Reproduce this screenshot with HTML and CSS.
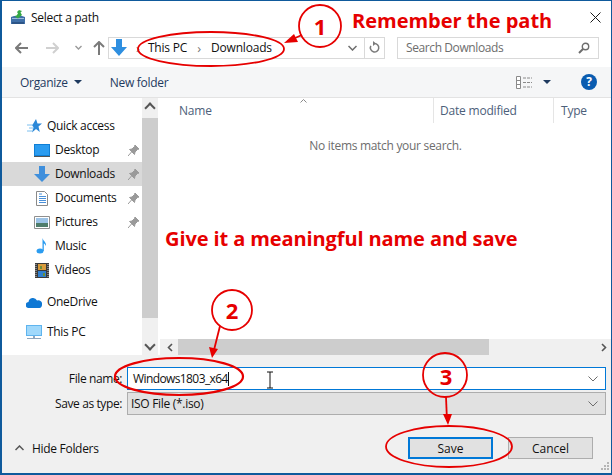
FILE: index.html
```html
<!DOCTYPE html>
<html lang="en">
<head>
    <meta charset="UTF-8">
    <title>Select a path</title>
    <link rel="stylesheet" href="styles.css">
</head>
<body>
<div class="window">

    <div class="titlebar">
        <svg class="app-icon" width="14" height="15" viewBox="0 0 14 15"><path d="M0 7l3-1h8l3 1v7H0z" fill="#3f6fa8"/><path d="M1 8h12v1H1z" fill="#9dbbdb"/><path d="M1 12h12v2H1z" fill="#2c5587"/><path d="M8 0l3 1-1.500 1.500L11 5 7 8.500 3.500 6l2-.5L7 3.500 6 2z" fill="#35a845"/></svg>
        <span class="title">Select a path</span>
        <svg class="close" width="11" height="11" viewBox="0 0 11 11"><path d="M.5.5l10 10M10.500.5l-10 10" stroke="#1a1a1a" stroke-width="1" fill="none"/></svg>
    </div>

    <div class="navbar">
        <svg class="nav-btn" width="14" height="12" viewBox="0 0 14 12"><path d="M6 1L1 6l5 5M1 6h12" stroke="#7a7a7a" stroke-width="2" fill="none"/></svg>
        <svg class="nav-btn fwd" width="14" height="12" viewBox="0 0 14 12"><path d="M8 1l5 5-5 5M13 6H1" stroke="#d0d0d0" stroke-width="2" fill="none"/></svg>
        <svg class="nav-btn drop" width="7" height="5" viewBox="0 0 7 5"><path d="M.5 1l3 3 3-3" stroke="#9a9a9a" stroke-width="1.400" fill="none"/></svg>
        <svg class="nav-btn up" width="12" height="14" viewBox="0 0 12 14"><path d="M1 6l5-5 5 5M6 1v13" stroke="#7a7a7a" stroke-width="2" fill="none"/></svg>
        <div class="address">
            <svg width="16" height="17" viewBox="0 0 16 17"><path d="M5 0h6v8h5l-8 9-8-9h5z" fill="#2f8fe0"/></svg>
            <span class="crumb-sep first">›</span>
            <span class="crumb">This PC</span>
            <span class="crumb-sep">›</span>
            <span class="crumb">Downloads</span>
            <svg class="addr-drop" width="9" height="6" viewBox="0 0 9 6"><path d="M.5 1l4 4 4-4" stroke="#6d6d6d" stroke-width="1.500" fill="none"/></svg>
            <span class="refresh">
                <svg width="11" height="13" viewBox="0 0 11 13"><path d="M5.500 2.500a4.200 4.200 0 1 1-3.700 2.300" stroke="#7a7a7a" stroke-width="1.500" fill="none"/><path d="M4 0l3 2.500L4 5z" fill="#7a7a7a"/></svg>
            </span>
        </div>
        <div class="search">
            <span>Search Downloads</span>
            <svg width="12" height="12" viewBox="0 0 12 12"><circle cx="7.500" cy="4.500" r="3.200" stroke="#6d6d6d" stroke-width="1.400" fill="none"/><path d="M5 7l-4 4" stroke="#6d6d6d" stroke-width="2"/></svg>
        </div>
    </div>

    <div class="toolbar">
        <span class="tool">Organize</span>
        <span class="caret"></span>
        <span class="tool new-folder">New folder</span>
        <svg class="view-icon" width="17" height="13" viewBox="0 0 17 13"><path d="M.5.500h4v12h-4zM.5 4.500h4M.5 8.500h4" stroke="#8a8a8a" fill="#fff"/><path d="M7 2h9M7 6.500h9M7 11h9" stroke="#8a8a8a" stroke-dasharray="3 1"/></svg>
        <span class="caret view-caret"></span>
        <span class="help">?</span>
    </div>

    <div class="browser">
        <div class="sidebar">
            <div class="tree">
                <div class="tree-item top first">
                    <svg width="16" height="14" viewBox="0 0 16 14"><path d="M10 0l1.500 4.500H16l-3.500 3 1.300 5.500-3.800-3-4 3.500 1.500-5.500L6 6.500l1-1.500z" fill="#2b88d8"/><path d="M1 6h6M3 9h5M1 12h5" stroke="#7cc0f0"/></svg>
                    <span>Quick access</span>
                </div>
                <div class="tree-item">
                    <svg width="16" height="13" viewBox="0 0 16 13"><path d="M0 0h16v12H0z" fill="#0f7fd6"/><path d="M1 1h14v10H1z" fill="#2b9cf0"/><path d="M0 12h16v1H0z" fill="#555"/></svg>
                    <span>Desktop</span><svg class="pin" width="11" height="11" viewBox="0 0 11 11"><path d="M7 0l4 4-1.500.5L7 7l-.5 2.500L1.500 4.500 4 4l2.500-2.500zM3.500 7L0 11" fill="#9a9a9a" stroke="#9a9a9a"/></svg>
                </div>
                <div class="tree-item selected">
                    <svg width="16" height="16" viewBox="0 0 16 16"><path d="M5 0h6v8h5l-8 8-8-8h5z" fill="#3f8fdc"/></svg>
                    <span>Downloads</span><svg class="pin" width="11" height="11" viewBox="0 0 11 11"><path d="M7 0l4 4-1.500.5L7 7l-.5 2.500L1.500 4.500 4 4l2.500-2.500zM3.500 7L0 11" fill="#9a9a9a" stroke="#9a9a9a"/></svg>
                </div>
                <div class="tree-item">
                    <svg width="16" height="15" viewBox="0 0 16 15"><path d="M2.500.5h8l3 3v11h-11z" fill="#fff" stroke="#8a8a8a"/><path d="M5 3h3M5 5.500h7M5 7.500h7M5 9.500h7M5 11.500h7" stroke="#4a90d9"/></svg>
                    <span>Documents</span><svg class="pin" width="11" height="11" viewBox="0 0 11 11"><path d="M7 0l4 4-1.500.5L7 7l-.5 2.500L1.500 4.500 4 4l2.500-2.500zM3.500 7L0 11" fill="#9a9a9a" stroke="#9a9a9a"/></svg>
                </div>
                <div class="tree-item">
                    <svg width="16" height="13" viewBox="0 0 16 13"><path d="M.5.500h15v12H.5z" fill="#fff" stroke="#8f8f8f"/><path d="M2 2h12v5H2z" fill="#9cc3e6"/><path d="M2 7h12v4H2z" fill="#4f7d6b"/></svg>
                    <span>Pictures</span><svg class="pin" width="11" height="11" viewBox="0 0 11 11"><path d="M7 0l4 4-1.500.5L7 7l-.5 2.500L1.500 4.500 4 4l2.500-2.500zM3.500 7L0 11" fill="#9a9a9a" stroke="#9a9a9a"/></svg>
                </div>
                <div class="tree-item">
                    <svg width="16" height="16" viewBox="0 0 16 16"><ellipse cx="6" cy="13" rx="3.500" ry="2.500" fill="#2b9cf0"/><path d="M8.500 13V0c1 3.500 4 4 3.500 8-1-2-2-2.500-2.200-2.500V13z" fill="#2b9cf0"/></svg>
                    <span>Music</span>
                </div>
                <div class="tree-item">
                    <svg width="16" height="15" viewBox="0 0 16 15"><path d="M1 0h14v15H1z" fill="#3a3a3a"/><path d="M2 1v13M14 1v13" stroke="#ccc" stroke-dasharray="1 1"/><path d="M4 1h8v6H4z" fill="#d89b3c"/><path d="M4 8h8v6H4z" fill="#2f7fd0"/><path d="M6 3h2v3H6zM9 10h2v3H9z" fill="#6a8f3c"/></svg>
                    <span>Videos</span>
                </div>
                <div class="tree-item top cloud">
                    <svg width="16" height="11" viewBox="0 0 16 11"><path d="M3 11a3 3 0 0 1-.5-6A4.500 4.500 0 0 1 11 3.500 3.800 3.800 0 0 1 16 8c0 1.500-1 3-2.500 3z" fill="#0f78d4"/></svg>
                    <span>OneDrive</span>
                </div>
                <div class="tree-item top pc">
                    <svg width="16" height="15" viewBox="0 0 16 15"><path d="M0 0h16v11H0z" fill="#5fb4ee"/><path d="M1 1h14v9H1z" fill="#9fd8fb"/><path d="M7 11h2v2H7zM1 13h14v1H1z" fill="#8fa6bd"/></svg>
                    <span>This PC</span>
                </div>
            </div>
            <div class="vscroll">
                <span class="arrow up-arrow"></span>
                <div class="vthumb"></div>
                <span class="arrow down-arrow"></span>
            </div>
        </div>

        <div class="files">
            <div class="file-head">
                <span class="col col-name">Name<svg class="sort" width="7" height="4" viewBox="0 0 7 4"><path d="M.5 3.500l3-3 3 3" stroke="#8a8a8a" fill="none"/></svg></span>
                <span class="col col-date">Date modified</span>
                <span class="col col-type">Type</span>
            </div>
            <div class="empty">No items match your search.</div>
            <div class="hscroll">
                <svg width="6" height="9" viewBox="0 0 6 9"><path d="M5 1L1.500 4.500 5 8" stroke="#555" stroke-width="1.600" fill="none"/></svg>
                <div class="hthumb"></div>
                <svg width="6" height="9" viewBox="0 0 6 9"><path d="M1 1l3.500 3.500L1 8" stroke="#555" stroke-width="1.600" fill="none"/></svg>
            </div>
        </div>
    </div>

    <div class="bottom">
        <div class="field">
            <label class="field-label">File name:</label>
            <div class="field-box name-box">
                <span class="typed">Windows1803_x64</span>
                <svg width="10" height="6" viewBox="0 0 10 6"><path d="M.5.500L5 5 9.500.500" stroke="#6d6d6d" fill="none"/></svg>
            </div>
        </div>
        <div class="field">
            <label class="field-label">Save as type:</label>
            <div class="field-box type-box">
                <span>ISO File (*.iso)</span>
                <svg width="10" height="6" viewBox="0 0 10 6"><path d="M.5.500L5 5 9.500.500" stroke="#6d6d6d" fill="none"/></svg>
            </div>
        </div>
        <div class="actions">
            <div class="hide-folders">
                <svg width="9" height="6" viewBox="0 0 9 6"><path d="M.5 5l4-4 4 4" stroke="#555" stroke-width="1.500" fill="none"/></svg>
                <span>Hide Folders</span>
            </div>
            <button class="btn btn-save" type="button">Save</button>
            <button class="btn" type="button">Cancel</button>
        </div>
    </div>

    <!-- Anmerkungen ueber dem Dialog -->
    <svg class="marks" width="612" height="475" viewBox="0 0 612 475">
        <g fill="none" stroke="#e60000" stroke-width="1.800">
            <ellipse cx="211" cy="49" rx="73" ry="17"/>
            <circle cx="320" cy="26" r="21"/>
            <path d="M302 35l-14 6"/>
            <circle cx="232" cy="310" r="20"/>
            <path d="M220 326l-6 24"/>
            <ellipse cx="179" cy="376.500" rx="64" ry="18.500" stroke-width="2.200"/>
            <circle cx="445" cy="375" r="22"/>
            <path d="M446 397l1 24"/>
            <ellipse cx="449" cy="446.500" rx="63" ry="20.500"/>
        </g>
        <g fill="#e60000">
            <path d="M284 43l10-9 4 8z"/>
            <path d="M212 358l-3-11 9 2z"/>
            <path d="M448 425l-5-11h9z"/>
        </g>
        <path d="M267 372h3v16h-3M273 372h-3M273 388h-3" fill="none" stroke="#111"/>
        <path d="M607 462h2v2h-2zM604 465h2v2h-2zM607 465h2v2h-2zM601 468h2v2h-2zM604 468h2v2h-2zM607 468h2v2h-2z" fill="#b5b5b5"/>
    </svg>
    <span class="note num num-1">1</span>
    <span class="note num num-2">2</span>
    <span class="note num num-3">3</span>
    <span class="note remember">Remember the path</span>
    <span class="note give">Give it a meaningful name and save</span>

</div>
</body>
</html>
```

FILE: styles.css
```css
* {
    box-sizing: border-box;
}

html, body {
    margin: 0;
    padding: 0;
}

body {
    width: 612px;
    height: 475px;
    overflow: hidden;
    font-family: "Open Sans", "Noto Sans", sans-serif;
    font-size: 12px;
    color: #111;
    background-color: white;
}

.window {
    position: relative;
    width: 612px;
    height: 475px;
    display: flex;
    flex-direction: column;
    border: 1px solid #0f5a9c;
    border-left-width: 2px;
    border-bottom-width: 2px;
    overflow: hidden;
}

.titlebar {
    height: 32px;
    flex: none;
    display: flex;
    align-items: center;
    padding-left: 9px;
}

.title {
    margin-left: 6px;
    letter-spacing: -0.3px;
}

.close {
    margin-left: auto;
    margin-right: 10px;
}

.navbar {
    height: 34px;
    flex: none;
    display: flex;
    align-items: center;
    padding-bottom: 5px;
}

.nav-btn {
    flex: none;
    margin-left: 13px;
}

.nav-btn.fwd {
    margin-left: 16px;
}

.nav-btn.drop {
    margin-left: 16px;
}

.nav-btn.up {
    margin-left: 11px;
}

.address {
    width: 277px;
    height: 22px;
    margin-left: 3px;
    display: flex;
    align-items: center;
    border: 1px solid #d9d9d9;
    padding-left: 2px;
    flex: none;
}

.crumb {
    letter-spacing: -0.2px;
}

.crumb-sep {
    color: #777;
    margin: 0 10px;
    font-size: 13px;
}

.crumb-sep.first {
    margin: 0 8px 0 9px;
}

.addr-drop {
    margin-left: auto;
    margin-right: 7px;
}

.refresh {
    width: 20px;
    height: 100%;
    border-left: 1px solid #d9d9d9;
    display: flex;
    align-items: center;
    justify-content: center;
}

.search {
    width: 202px;
    height: 22px;
    margin-left: 12px;
    display: flex;
    align-items: center;
    justify-content: space-between;
    border: 1px solid #d9d9d9;
    padding: 0 8px;
    color: #6d6d6d;
    letter-spacing: -0.4px;
    flex: none;
}

.toolbar {
    height: 31px;
    flex: none;
    display: flex;
    align-items: center;
    background-color: #f5f6f7;
    border-bottom: 1px solid #e3e3e3;
    padding-left: 18px;
}

.tool {
    color: #1e3a5f;
    letter-spacing: -0.3px;
}

.new-folder {
    margin-left: 28px;
}

.caret {
    width: 0;
    height: 0;
    margin-left: 6px;
    border-left: 4px solid transparent;
    border-right: 4px solid transparent;
    border-top: 4px solid #1e3a5f;
}

.view-icon {
    margin-left: auto;
}

.view-caret {
    margin-left: 10px;
}

.help {
    width: 16px;
    height: 16px;
    margin: 0 14px 0 30px;
    border-radius: 50%;
    background-color: #0a5cb0;
    color: white;
    font-weight: bold;
    font-size: 12px;
    line-height: 16px;
    text-align: center;
}

.browser {
    flex: 1;
    display: flex;
    min-height: 0;
}

.sidebar {
    width: 156px;
    flex: none;
    display: flex;
}

.tree {
    width: 140px;
    flex: none;
    display: flex;
    flex-direction: column;
}

.tree-item {
    height: 24px;
    flex: none;
    display: flex;
    align-items: center;
    padding-left: 32px;
    letter-spacing: -0.3px;
}

.tree-item span {
    margin-bottom: 2px;
}

.tree-item svg:first-child {
    margin-right: 5px;
    flex: none;
}

.tree-item.top {
    padding-left: 24px;
}

.tree-item.first {
    margin-top: 16px;
}

.tree-item.cloud {
    margin-top: 8px;
}

.tree-item.pc {
    margin-top: 6px;
}

.tree-item.selected {
    background-color: #d9d9d9;
}

.pin {
    margin-left: auto;
    margin-right: 3px;
}

.vscroll {
    width: 16px;
    flex: none;
    display: flex;
    flex-direction: column;
    background-color: #f0f0f0;
}

.arrow {
    height: 20px;
    flex: none;
    display: flex;
    align-items: center;
    justify-content: center;
}

.arrow::before {
    content: "";
    width: 6px;
    height: 6px;
    border-left: 2px solid #555;
    border-top: 2px solid #555;
    transform: rotate(45deg);
}

.down-arrow {
    margin-top: auto;
}

.down-arrow::before {
    transform: rotate(225deg);
}

.vthumb {
    height: 200px;
    background-color: #cdcdcd;
}

.files {
    flex: 1;
    margin-left: 2px;
    display: flex;
    flex-direction: column;
    min-width: 0;
}

.file-head {
    height: 25px;
    flex: none;
    display: flex;
    align-items: center;
    color: #4c607a;
}

.col {
    height: 100%;
    display: flex;
    align-items: center;
    letter-spacing: -0.2px;
}

.col-name {
    width: 273px;
    padding-left: 19px;
}

.sort {
    align-self: flex-start;
    margin-left: 88px;
    margin-top: 1px;
}

.col-date {
    width: 120px;
    padding-left: 6px;
    border-left: 1px solid #e5e5e5;
}

.col-type {
    padding-left: 7px;
    border-left: 1px solid #e5e5e5;
}

.empty {
    flex: 1;
    padding-top: 14px;
    text-align: center;
    color: #6d6d6d;
    letter-spacing: -0.3px;
}

.hscroll {
    height: 16px;
    flex: none;
    display: flex;
    align-items: center;
    background-color: #f0f0f0;
    padding: 0 4px 0 7px;
}

.hthumb {
    width: 311px;
    height: 100%;
    margin-left: 5px;
    margin-right: auto;
    background-color: #cdcdcd;
}

.bottom {
    height: 118px;
    flex: none;
    background-color: #f0f0f0;
    padding-top: 12px;
    display: flex;
    flex-direction: column;
}

.field {
    display: flex;
    align-items: center;
    height: 23px;
    margin-bottom: 2px;
}

.field-label {
    width: 120px;
    text-align: right;
    letter-spacing: -0.4px;
    flex: none;
}

.field-box {
    width: 479px;
    height: 23px;
    margin-left: 5px;
    display: flex;
    align-items: center;
    justify-content: space-between;
    padding: 0 7px 0 5px;
    letter-spacing: -0.3px;
}

.name-box {
    background-color: white;
    border: 1px solid #0078d7;
}

.typed {
    border-right: 1px solid #111;
    line-height: 14px;
    letter-spacing: -0.6px;
}

.type-box {
    background-color: #e1e1e1;
    border: 1px solid #adadad;
    padding-left: 3px;
}

.actions {
    margin-top: 20px;
    display: flex;
    align-items: center;
}

.hide-folders {
    display: flex;
    align-items: center;
    gap: 8px;
    margin-left: 13px;
    margin-right: auto;
    letter-spacing: -0.3px;
}

.btn {
    width: 85px;
    height: 22px;
    padding: 0;
    font-family: inherit;
    font-size: 12px;
    color: #111;
    background-color: #e1e1e1;
    border: 1px solid #adadad;
    margin-right: 18px;
}

.btn-save {
    border: 2px solid #0078d7;
    margin-right: 15px;
}

.marks {
    position: absolute;
    left: -2px;
    top: -1px;
    pointer-events: none;
}

.note {
    position: absolute;
    color: #e60000;
    font-weight: bold;
    white-space: nowrap;
}

.num {
    font-size: 22px;
    line-height: 26px;
    width: 30px;
    text-align: center;
}

.num-1 {
    left: 303px;
    top: 12px;
}

.num-2 {
    left: 215px;
    top: 296px;
}

.num-3 {
    left: 429px;
    top: 362px;
}

.remember {
    left: 350px;
    top: 6px;
    font-size: 20px;
    line-height: 28px;
}

.give {
    left: 163px;
    top: 224px;
    font-size: 20px;
    line-height: 28px;
    letter-spacing: -0.1px;
}
```
